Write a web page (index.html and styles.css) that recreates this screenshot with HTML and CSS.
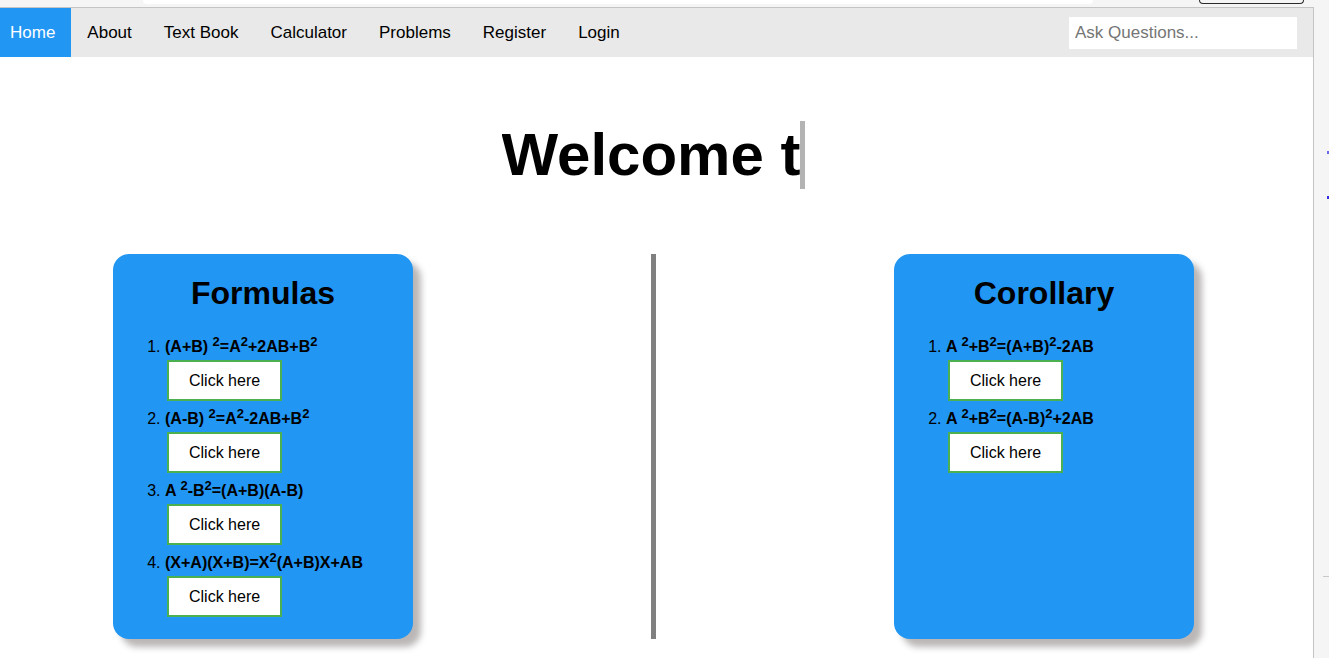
FILE: index.html
```html
<!DOCTYPE html>
<html lang="en">
<head>
<meta charset="utf-8">
<title>Maths</title>
<link rel="stylesheet" href="styles.css">
</head>
<body>
<div class="chrome-top">
  <div class="urlbar"></div>
  <div class="pill"></div>
</div>
<div class="frame">
  <div class="viewport">
    <div class="page">
      <nav class="topnav">
        <a class="nav-link active" href="#">Home</a>
        <a class="nav-link" href="#">About</a>
        <a class="nav-link" href="#">Text Book</a>
        <a class="nav-link" href="#">Calculator</a>
        <a class="nav-link" href="#">Problems</a>
        <a class="nav-link" href="#">Register</a>
        <a class="nav-link" href="#">Login</a>
        <input class="search" type="text" placeholder="Ask Questions...">
      </nav>
      <header class="hero">
        <h1 class="typewriter">Welcome t</h1>
      </header>
      <section class="row">
        <div class="card">
          <h2 class="card-title">Formulas</h2>
          <ol class="formula-list">
            <li>
              <div class="formula">(A+B) <sup>2</sup>=A<sup>2</sup>+2AB+B<sup>2</sup></div>
              <button class="btn">Click here</button>
            </li>
            <li>
              <div class="formula">(A-B) <sup>2</sup>=A<sup>2</sup>-2AB+B<sup>2</sup></div>
              <button class="btn">Click here</button>
            </li>
            <li>
              <div class="formula">A <sup>2</sup>-B<sup>2</sup>=(A+B)(A-B)</div>
              <button class="btn">Click here</button>
            </li>
            <li>
              <div class="formula">(X+A)(X+B)=X<sup>2</sup>(A+B)X+AB</div>
              <button class="btn">Click here</button>
            </li>
          </ol>
        </div>
        <div class="divider"></div>
        <div class="card">
          <h2 class="card-title">Corollary</h2>
          <ol class="formula-list">
            <li>
              <div class="formula">A <sup>2</sup>+B<sup>2</sup>=(A+B)<sup>2</sup>-2AB</div>
              <button class="btn">Click here</button>
            </li>
            <li>
              <div class="formula">A <sup>2</sup>+B<sup>2</sup>=(A-B)<sup>2</sup>+2AB</div>
              <button class="btn">Click here</button>
            </li>
          </ol>
        </div>
      </section>
    </div>
  </div>
  <div class="sidebar">
    <div class="sb-dot sb-dot-1"></div>
    <div class="sb-dot sb-dot-2"></div>
    <div class="sb-line"></div>
  </div>
</div>
</body>
</html>
```
FILE: styles.css
```css
* { box-sizing: border-box; }

html, body {
  margin: 0;
  padding: 0;
  height: 100%;
  overflow: hidden;
}

body {
  background: #f5f5f5;
  font-family: "Liberation Sans", Arial, sans-serif;
  color: #000;
}

/* browser chrome strip */
.chrome-top {
  height: 7px;
  display: flex;
  align-items: flex-start;
}

.urlbar {
  margin-left: 143px;
  width: 950px;
  height: 4px;
  background: #fff;
  border-radius: 0 0 9px 9px;
}

.pill {
  margin-left: 106px;
  width: 105px;
  height: 4px;
  border: 1px solid #2a2a2a;
  border-top: none;
  border-radius: 0 0 12px 12px;
}

.frame {
  display: flex;
  height: 651px;
}

.viewport {
  width: 1314px;
  flex: none;
  background: #fff;
  border-top: 1px solid #c4c4c4;
  border-right: 1px solid #c4c4c4;
  overflow: hidden;
}

.page {
  width: 1319px;
  margin-left: -6px;
}

/* top navigation */
.topnav {
  display: flex;
  align-items: center;
  background: #e9e9e9;
  height: 49px;
}

.nav-link {
  display: block;
  padding: 14px 16px;
  font-size: 17px;
  line-height: 21px;
  color: #000;
  text-decoration: none;
}

.nav-link.active {
  background: #2196F3;
  color: #fff;
}

.search {
  margin-left: auto;
  margin-right: 16px;
  width: 228px;
  height: 32px;
  padding: 6px;
  border: none;
  outline: none;
  background: #fff;
  font-family: "Liberation Sans", Arial, sans-serif;
  font-size: 17px;
  color: #000;
}

.search::placeholder {
  color: #757575;
}

/* hero */
.hero {
  display: flex;
  justify-content: center;
  margin: 64px 0 65px;
}

.typewriter {
  margin: 0;
  font-size: 60px;
  line-height: 68px;
  font-weight: bold;
  white-space: nowrap;
  overflow: hidden;
  border-right: 5px solid #b3b3b3;
}

/* cards row */
.row {
  display: flex;
  justify-content: space-around;
  align-items: stretch;
}

.card {
  width: 300px;
  padding: 0 12px 15px;
  background: #2196F3;
  border-radius: 16px;
  box-shadow: 8px 8px 6px rgba(60, 50, 50, 0.35);
}

.divider {
  width: 5px;
  background: #808080;
}

.card-title {
  margin: 21px 0 24px;
  font-size: 32px;
  line-height: 37px;
  text-align: center;
  font-weight: bold;
}

.formula-list {
  margin: 0;
  padding-left: 40px;
  font-size: 16px;
}

.formula {
  font-weight: bold;
  line-height: 22px;
}

.formula sup {
  font-size: 13px;
  line-height: 0;
}

.btn {
  display: block;
  margin: 2px 0 7px 2px;
  padding: 9px 20px;
  border: 2px solid #4CAF50;
  background: #fff;
  font-family: "Liberation Sans", Arial, sans-serif;
  font-size: 16px;
  line-height: 19px;
  color: #000;
}

/* right browser side strip */
.sidebar {
  flex: 1;
  display: flex;
  flex-direction: column;
  align-items: flex-end;
}

.sb-dot {
  width: 2px;
  height: 3px;
  background: #6a6af0;
}

.sb-dot-1 { margin-top: 144px; }
.sb-dot-2 { margin-top: 42px; background: #3030e0; }

.sb-line {
  margin-top: 377px;
  width: 6px;
  height: 1px;
  background: #c8c8c8;
}
```
